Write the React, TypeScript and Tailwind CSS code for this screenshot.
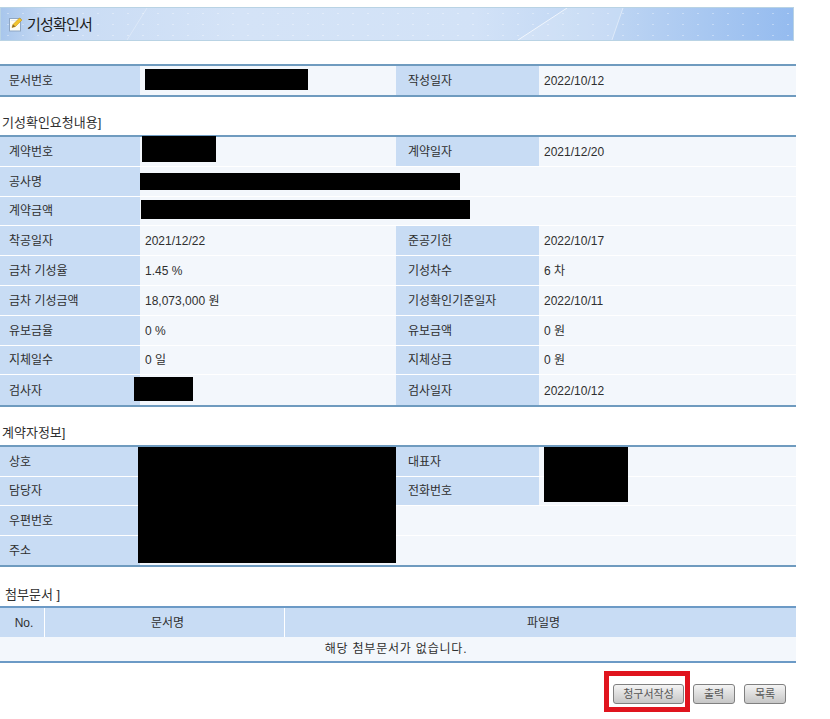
const FONT = "font-['Liberation_Sans','Noto_Sans_CJK_KR',sans-serif]";

type Row = [string, string, string?, string?];

const DOC_ROWS: Row[] = [['문서번호', '', '작성일자', '2022/10/12']];

const REQUEST_ROWS: Row[] = [
  ['계약번호', '', '계약일자', '2021/12/20'],
  ['공사명', ''],
  ['계약금액', ''],
  ['착공일자', '2021/12/22', '준공기한', '2022/10/17'],
  ['금차 기성율', '1.45 %', '기성차수', '6 차'],
  ['금차 기성금액', '18,073,000 원', '기성확인기준일자', '2022/10/11'],
  ['유보금율', '0 %', '유보금액', '0 원'],
  ['지체일수', '0 일', '지체상금', '0 원'],
  ['검사자', '', '검사일자', '2022/10/12'],
];

const CONTRACTOR_ROWS: Row[] = [
  ['상호', '', '대표자', ''],
  ['담당자', '', '전화번호', ''],
  ['우편번호', ''],
  ['주소', ''],
];

function InfoTable({ rows, rowClass }: { rows: Row[]; rowClass: string }) {
  return (
    <div className="w-[796px] border-y-2 border-[#6f9bbf]">
      {rows.map((row, i) => (
        <div key={i} className={`grid grid-cols-[140px_256px_143px_257px] ${rowClass} ${i < rows.length - 1 ? 'border-b border-white' : ''}`}>
          <div className="flex items-center bg-[#c8dcf4] pl-[9px] pt-px">{row[0]}</div>
          {row[2] ? (
            <>
              <div className="flex items-center bg-[#f3f7fc] pl-[5px] pt-px">{row[1]}</div>
              <div className="flex items-center bg-[#c8dcf4] pl-[12px] pt-px">{row[2]}</div>
              <div className="flex items-center bg-[#f3f7fc] pl-[5px] pt-px">{row[3]}</div>
            </>
          ) : (
            <div className="col-span-3 flex items-center bg-[#f3f7fc] pl-[5px] pt-px">{row[1]}</div>
          )}
        </div>
      ))}
    </div>
  );
}

function SectionTitle({ text, className }: { text: string; className: string }) {
  return <div className={`h-5 text-[13px] leading-5 ${className}`}>{text}</div>;
}

function NoteIcon() {
  return (
    <svg width="14" height="16" viewBox="0 0 14 16" className="shrink-0">
      <rect x="0.5" y="2.5" width="11" height="12.5" fill="#fdfdf6" stroke="#8ea6c4" />
      <path d="M2 4h8v1H2z" fill="#e3eaf3" />
      <path d="M3 11.5l1-3L10.5 2l2.5 2-6.5 6.5z" fill="#f2c52e" stroke="#c7951a" strokeWidth="0.6" />
      <path d="M3 11.5l1-3 2.500 2z" fill="#8a6a2a" />
    </svg>
  );
}

function TitleArt() {
  return (
    <svg className="absolute inset-0 h-full w-full" viewBox="0 0 792 32" preserveAspectRatio="none">
      <path d="M126 32L146 0" stroke="#ffffff" strokeOpacity="0.3" fill="none" />
      <path d="M517 32L566 0H622L611 32z" fill="#ffffff" fillOpacity="0.16" />
      <path d="M517 32L566 0" stroke="#ffffff" strokeOpacity="0.7" fill="none" />
      <path d="M611 32L622 0" stroke="#ffffff" strokeOpacity="0.45" fill="none" />
    </svg>
  );
}

function Btn({ label, className }: { label: string; className: string }) {
  return (
    <button className={`flex h-5 items-center justify-center rounded-[3px] border border-[#808080] bg-gradient-to-b from-[#f4f4f4] to-[#c6c6c6] text-[11px] text-[#555] ${className}`}>
      {label}
    </button>
  );
}

function Blackout({ className }: { className: string }) {
  return <div className={`absolute bg-black ${className}`} />;
}

export default function App() {
  return (
    <div className={`relative h-[719px] w-[830px] overflow-hidden bg-white pt-[7px] text-[12px] text-[#2f2f2f] ${FONT}`}>
      {/* Title bar */}
      <div className="relative flex h-[34px] w-[794px] items-center gap-[4px] overflow-hidden border border-[#b9d3e4] bg-[linear-gradient(90deg,#a8c6ec_0%,#c8dbf4_6%,#d4e3f7_30%,#d2e2f7_60%,#bcd4f3_78%,#94bbef_100%)] pl-2">
        <div className="absolute inset-0 bg-[radial-gradient(#ffffff55_1px,transparent_1px)] bg-[length:15px_11px]" />
        <TitleArt />
        <div className="relative"><NoteIcon /></div>
        <span className="relative pt-px text-[15px] leading-none tracking-[-0.8px] text-[#1c1c1c]">기성확인서</span>
      </div>

      <div className="mt-[23px]">
        <InfoTable rows={DOC_ROWS} rowClass="h-[29px]" />
      </div>

      <SectionTitle text="기성확인요청내용]" className="mb-[2px] mt-4 pl-[2px]" />
      <InfoTable rows={REQUEST_ROWS} rowClass="h-[29.8px]" />

      <SectionTitle text="계약자정보]" className="mb-[2px] mt-4 pl-[2px]" />
      <InfoTable rows={CONTRACTOR_ROWS} rowClass="h-[29.5px]" />

      <SectionTitle text="첨부문서 ]" className="mb-px mt-[18px] pl-[5px]" />
      <div className="w-[796px] border-y-2 border-[#6c9ac6]">
        <div className="grid h-[29px] grid-cols-[45px_240px_511px] bg-[#c8dcf4]">
          <div className="flex items-center justify-center border-r border-white pl-1">No.</div>
          <div className="flex items-center justify-center border-r border-white pl-[6px]">문서명</div>
          <div className="flex items-center justify-center pl-[6px]">파일명</div>
        </div>
        <div className="flex h-6 items-center justify-center bg-[#f3f7fc] pr-1 tracking-[0.8px]">해당 첨부문서가 없습니다.</div>
      </div>

      <div className="mt-[21px] flex w-[786px] justify-end gap-[9px]">
        <Btn label="청구서작성" className="w-[71px]" />
        <Btn label="출력" className="w-[42px]" />
        <Btn label="목록" className="w-[42px]" />
      </div>

      {/* Redactions and the red marker lie over the form */}
      <Blackout className="left-[145px] top-[69px] h-[21px] w-[163px]" />
      <Blackout className="left-[142px] top-[136px] h-[26px] w-[74px]" />
      <Blackout className="left-[140px] top-[173px] h-[17px] w-[320px]" />
      <Blackout className="left-[141px] top-[200px] h-[19px] w-[329px]" />
      <Blackout className="left-[134px] top-[377px] h-[24px] w-[59px]" />
      <Blackout className="left-[138px] top-[447px] h-[116px] w-[258px]" />
      <Blackout className="left-[544px] top-[447px] h-[55px] w-[84px]" />
      <div className="absolute left-[604px] top-[671px] h-[41px] w-[86px] border-[5px] border-[#e0141e]" />
    </div>
  );
}
